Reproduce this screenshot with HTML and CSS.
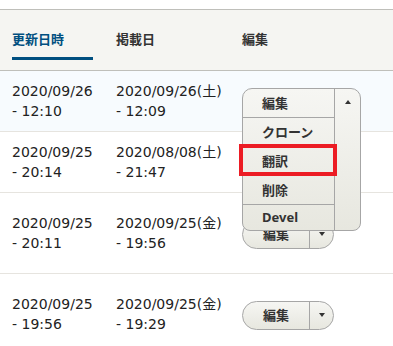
FILE: index.html
```html
<!DOCTYPE html>
<html lang="ja">
<head>
    <meta charset="UTF-8">
    <meta name="viewport" content="width=device-width, initial-scale=1.0">
    <title>コンテンツ一覧</title>
    <link rel="stylesheet" href="styles.css">
</head>
<body>
    <div class="content-list">
        <div class="list-head">
            <div class="head-cell is-active"><span class="sort-link">更新日時</span></div>
            <div class="head-cell">掲載日</div>
            <div class="head-cell">編集</div>
        </div>

        <div class="list-row short is-selected">
            <div class="cell">2020/09/26<br>- 12:10</div>
            <div class="cell">2020/09/26(土)<br>- 12:09</div>
            <div class="cell ops">
                <div class="dropbutton-open">
                    <ul class="drop-items">
                        <li class="drop-item first">編集</li>
                        <li class="drop-item">クローン</li>
                        <li class="drop-item mid marked">翻訳</li>
                        <li class="drop-item short-item">削除</li>
                        <li class="drop-item last">Devel</li>
                    </ul>
                    <div class="drop-toggle"><span class="arrow-up"></span></div>
                </div>
            </div>
        </div>

        <div class="list-row short">
            <div class="cell">2020/09/25<br>- 20:14</div>
            <div class="cell">2020/08/08(土)<br>- 21:47</div>
            <div class="cell ops"></div>
        </div>

        <div class="list-row tall">
            <div class="cell">2020/09/25<br>- 20:11</div>
            <div class="cell">2020/09/25(金)<br>- 19:56</div>
            <div class="cell ops">
                <div class="dropbutton">
                    <span class="drop-main">編集</span>
                    <span class="drop-arrow"><span class="arrow-down"></span></span>
                </div>
            </div>
        </div>

        <div class="list-row tall">
            <div class="cell">2020/09/25<br>- 19:56</div>
            <div class="cell">2020/09/25(金)<br>- 19:29</div>
            <div class="cell ops">
                <div class="dropbutton">
                    <span class="drop-main">編集</span>
                    <span class="drop-arrow"><span class="arrow-down"></span></span>
                </div>
            </div>
        </div>
    </div>
</body>
</html>
```

FILE: styles.css
```css
* {
    margin: 0;
    padding: 0;
    box-sizing: border-box;
}

body {
    font-family: "DejaVu Sans", "Noto Sans CJK JP", sans-serif;
    background-color: white;
    color: #222;
    overflow: hidden;
}

.content-list {
    margin-top: 9px;
}

.list-head,
.list-row {
    display: grid;
    grid-template-columns: 104px 126px 1fr;
}

.list-head {
    height: 62px;
    background: #f5f5f2;
    border-top: 1px solid #bfbfba;
    border-bottom: 1px solid #bfbfba;
}

.head-cell {
    padding: 19px 11px 0 12px;
    font-family: "Noto Sans CJK JP", sans-serif;
    font-size: 13px;
    font-weight: bold;
    line-height: 20px;
    color: #333;
}

.sort-link {
    display: block;
    padding-bottom: 8px;
    border-bottom: 3px solid #004f80;
    color: #004f80;
}

.list-row {
    border-bottom: 1px solid #e6e4df;
}

.list-row.short {
    height: 61px;
}

.list-row.tall {
    height: 81px;
}

.list-row.is-selected {
    background: #f7fbfe;
}

.cell {
    align-self: center;
    padding-left: 12px;
    font-size: 14px;
    line-height: 20px;
    color: #222;
}

.cell.ops {
    align-self: stretch;
    display: flex;
    align-items: center;
    position: relative;
}

/* closed dropbutton */
.dropbutton {
    display: flex;
    height: 29px;
    border: 1px solid #a6a6a6;
    border-radius: 15px;
    background: linear-gradient(to bottom, #f6f6f3, #e7e7df);
    color: #333;
    font-family: "Noto Sans", "Noto Sans CJK JP", sans-serif;
    font-size: 13px;
    font-weight: bold;
    margin-top: 2px;
}

.drop-main {
    width: 66px;
    display: flex;
    align-items: center;
    justify-content: center;
}

.drop-arrow {
    width: 24px;
    border-left: 1px solid #a6a6a6;
    display: flex;
    align-items: center;
    justify-content: center;
}

.arrow-down {
    width: 0;
    height: 0;
    border-left: 3.5px solid transparent;
    border-right: 3.5px solid transparent;
    border-top: 4px solid #333;
}

.arrow-up {
    display: block;
    width: 0;
    height: 0;
    margin: 11px auto 0;
    border-left: 3.5px solid transparent;
    border-right: 3.5px solid transparent;
    border-bottom: 4px solid #333;
}

/* opened dropbutton, lies over the rows below */
.dropbutton-open {
    position: absolute;
    top: 17px;
    left: 12px;
    z-index: 2;
    display: flex;
    width: 119px;
    border: 1px solid #a6a6a6;
    border-radius: 10px 10px 8px 8px;
    background: linear-gradient(to bottom, #f6f6f3, #e7e7df);
    color: #333;
    font-family: "Noto Sans", "Noto Sans CJK JP", sans-serif;
    font-size: 13px;
    font-weight: bold;
}

.drop-items {
    list-style: none;
    width: 91px;
}

.drop-item {
    position: relative;
    height: 29px;
    line-height: 29px;
    padding-left: 19px;
}

.drop-item.first {
    height: 29px;
    line-height: 28px;
    border-bottom: 1px solid #a6a6a6;
}

.drop-item.short-item {
    height: 28px;
    line-height: 28px;
}

.drop-item.last {
    height: 26px;
    line-height: 25px;
    border-top: 1px solid #a6a6a6;
}

.drop-item.marked::after {
    content: "";
    position: absolute;
    top: -3px;
    bottom: 0;
    left: -4px;
    right: -3px;
    border: 4px solid #ec1c24;
}

.drop-toggle {
    width: 26px;
    border-left: 1px solid #a6a6a6;
}
```
